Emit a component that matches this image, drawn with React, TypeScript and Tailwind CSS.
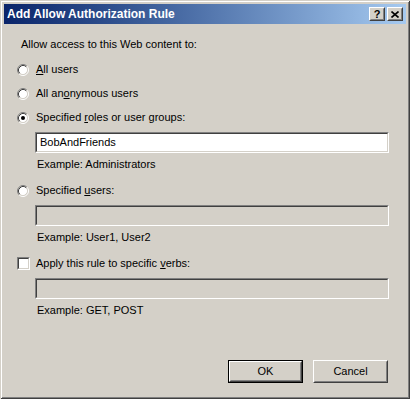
import React from 'react';

function Radio({ checked }: { checked?: boolean }) {
  return (
    <svg width="12" height="12" viewBox="0 0 12 12" className="shrink-0">
      <circle cx="6" cy="6" r="4.5" fill="#fff" />
      <path d="M2.11 9.89 A5.5 5.5 0 0 1 9.89 2.11" fill="none" stroke="#808080" />
      <path d="M9.89 2.11 A5.5 5.5 0 0 1 2.11 9.89" fill="none" stroke="#fff" />
      <path d="M2.82 9.18 A4.5 4.5 0 0 1 9.18 2.82" fill="none" stroke="#404040" />
      <path d="M9.18 2.82 A4.5 4.5 0 0 1 2.82 9.18" fill="none" stroke="#d4d0c8" />
      {checked && <circle cx="6" cy="6" r="2" fill="#000" />}
    </svg>
  );
}

function Sunken({ className, children }: { className?: string; children?: React.ReactNode }) {
  return (
    <div className={`border border-t-[#808080] border-l-[#808080] border-b-white border-r-white ${className ?? ''}`}>
      <div className="h-full border border-t-[#404040] border-l-[#404040] border-b-[#d4d0c8] border-r-[#d4d0c8]">
        {children}
      </div>
    </div>
  );
}

function TextBox({ value, enabled }: { value?: string; enabled?: boolean }) {
  return (
    <Sunken className="ml-[31px] w-[354px] h-[21px]">
      <div className={`h-full flex items-center pl-[3px] ${enabled ? 'bg-white' : 'bg-[#d4d0c8]'}`}>{value}</div>
    </Sunken>
  );
}

function Button({ label, isDefault }: { label: string; isDefault?: boolean }) {
  return (
    <div className={`w-[75px] h-[23px] ${isDefault ? 'border border-black' : ''}`}>
      <div className="h-full border border-t-white border-l-white border-b-[#404040] border-r-[#404040]">
        <div className="h-full flex items-center justify-center border border-t-[#d4d0c8] border-l-[#d4d0c8] border-b-[#808080] border-r-[#808080]">
          {label}
        </div>
      </div>
    </div>
  );
}

function CaptionButton({ children }: { children: React.ReactNode }) {
  return (
    <div className="w-[16px] h-[14px] bg-[#d4d0c8] border border-t-white border-l-white border-b-[#404040] border-r-[#404040]">
      <div className="h-full flex items-center justify-center border border-t-[#d4d0c8] border-l-[#d4d0c8] border-b-[#808080] border-r-[#808080]">
        {children}
      </div>
    </div>
  );
}

export default function App() {
  return (
    <div className="w-[410px] h-[399px] bg-[#d4d0c8] p-[4px] flex flex-col font-['Liberation_Sans',Arial,sans-serif] text-[11px] leading-[13px] text-black shadow-[inset_1px_1px_0_#d4d0c8,inset_-1px_-1px_0_#404040,inset_2px_2px_0_#fff,inset_-2px_-2px_0_#808080]">
      {/* title bar */}
      <div className="h-[20px] flex items-center bg-gradient-to-r from-[#0a246a] to-[#a6caf0] pl-[3px] pr-[3px]">
        <span className="flex-1 font-bold text-[12px] text-white">Add Allow Authorization Rule</span>
        <div className="flex gap-[2px]">
          <CaptionButton>
            <span className="font-bold text-[11px] leading-[11px]">?</span>
          </CaptionButton>
          <CaptionButton>
            <svg width="8" height="7" viewBox="0 0 8 7">
              <path d="M0.5 0.5 L7.5 6.5 M7.5 0.5 L0.5 6.5" stroke="#000" strokeWidth="1.6" />
            </svg>
          </CaptionButton>
        </div>
      </div>

      <div className="flex-1 flex flex-col pl-[13px]">
        <div className="mt-[14px] ml-[4px]">Allow access to this Web content to:</div>

        <div className="mt-[12px] flex items-center gap-[7px]">
          <Radio />
          <span><u>A</u>ll users</span>
        </div>
        <div className="mt-[11px] flex items-center gap-[7px]">
          <Radio />
          <span>All an<u>o</u>nymous users</span>
        </div>
        <div className="mt-[11px] flex items-center gap-[7px]">
          <Radio checked />
          <span>Specified <u>r</u>oles or user groups:</span>
        </div>
        <div className="-ml-[13px] mt-[8px]">
          <TextBox value="BobAndFriends" enabled />
        </div>
        <div className="ml-[20px] mt-[5px]">Example: Administrators</div>

        <div className="mt-[13px] flex items-center gap-[7px]">
          <Radio />
          <span>Specified <u>u</u>sers:</span>
        </div>
        <div className="-ml-[13px] mt-[8px]">
          <TextBox />
        </div>
        <div className="ml-[20px] mt-[5px]">Example: User1, User2</div>

        <div className="mt-[13px] flex items-center gap-[6px]">
          <Sunken className="w-[13px] h-[13px] shrink-0">
            <div className="h-full bg-white" />
          </Sunken>
          <span>Apply this rule to specific <u>v</u>erbs:</span>
        </div>
        <div className="-ml-[13px] mt-[8px]">
          <TextBox />
        </div>
        <div className="ml-[20px] mt-[5px]">Example: GET, POST</div>

        <div className="mt-auto mb-[12px] flex justify-end gap-[10px] pr-[18px]">
          <Button label="OK" isDefault />
          <Button label="Cancel" />
        </div>
      </div>
    </div>
  );
}
